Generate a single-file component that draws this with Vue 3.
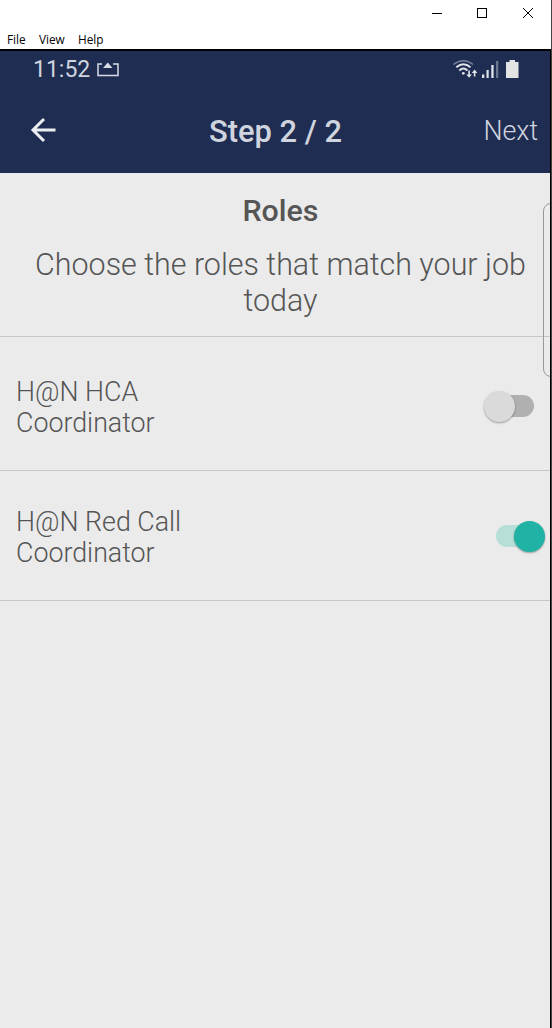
<script setup>
import { ref } from "vue";

const menuItems = ["File", "View", "Help"];

const roles = ref([
    { id: 1, lines: ["H@N HCA", "Coordinator"], enabled: false },
    { id: 2, lines: ["H@N Red Call", "Coordinator"], enabled: true },
]);

const toggleRole = (role) => {
    role.enabled = !role.enabled;
};
</script>

<template>
    <div class="window">
        <div class="title-bar">
            <svg class="window-controls" width="120" height="26" viewBox="0 0 120 26" fill="none" stroke="#000" shape-rendering="crispEdges">
                <path d="M0 13.5h10" />
                <rect x="45.5" y="8.5" width="9" height="9" />
                <path d="M91 8l10 10M101 8l-10 10" shape-rendering="auto" />
            </svg>
        </div>
        <nav class="menu-bar">
            <span v-for="item in menuItems" :key="item" class="menu-item">{{ item }}</span>
        </nav>

        <div class="screen">
            <header class="app-header">
                <div class="status-bar">
                    <span class="clock">11:52</span>
                    <svg class="cast-icon" width="24" height="18" viewBox="0 0 24 18">
                        <path d="M6 3H2v11.5h20V3H17" fill="none" stroke="#d6dbe5" stroke-width="1.5" />
                        <path d="M11.8 1.5l4.7 5.5h-9.4z" fill="#d6dbe5" />
                    </svg>
                    <svg class="signal-icons" width="70" height="22" viewBox="0 0 70 22">
                        <g fill="none" stroke="#dfe3ea" stroke-width="1.9">
                            <path d="M.5 5.5Q10.5 -1.8 20 5.5" stroke="#7a849d" stroke-width="1.5" />
                            <path d="M3.3 8.3Q10.5 2.2 17.5 8.3" />
                            <path d="M6.3 11.5Q10.5 7.7 14.5 11.5" />
                        </g>
                        <circle cx="10.3" cy="14.3" r="1.4" fill="#dfe3ea" />
                        <path d="M15.3 11.5h1.6v4h2l-2.8 3.3-2.8-3.3h2zM20.8 17.5h1.6v-3.5h2L21.6 10.5l-2.8 3.5h2z" fill="#dfe3ea" />
                        <path d="M29 15.5h2.3V19H29zM33.5 11h2.2v8h-2.2zM38.3 6h2.3v13h-2.3z" fill="#dfe3ea" />
                        <path d="M43 2h2.3v17H43z" fill="#6b7691" />
                        <path d="M56.5 1h5.5v2h3.5v16H53V3h3.5z" fill="#e2e3e4" />
                    </svg>
                </div>
                <div class="nav-bar">
                    <svg class="back-icon" width="27" height="26" viewBox="0 0 27 26" fill="none" stroke="#ebedf0" stroke-width="3">
                        <path d="M25.5 13H3M14 2L3 13l11 11" />
                    </svg>
                    <h1>Step 2 / 2</h1>
                    <span class="next">Next</span>
                </div>
            </header>

            <section class="intro">
                <h2>Roles</h2>
                <p>Choose the roles that match your job<br />today</p>
            </section>

            <div v-for="role in roles" :key="role.id" class="role-row" :class="{ enabled: role.enabled }" @click="toggleRole(role)">
                <div class="role-name">
                    <div v-for="line in role.lines" :key="line">{{ line }}</div>
                </div>
                <div class="switch"><span class="thumb"></span></div>
            </div>

            <div class="edge-handle"></div>
        </div>
    </div>
</template>

<style>
body {
    background: #fff;
    overflow: hidden;
}
</style>

<style scoped>
.window {
    box-sizing: border-box;
    width: 552px;
    height: 1028px;
    display: flex;
    flex-direction: column;
    border-right: 1px solid #444;
    background: #fff;
    overflow: hidden;
}

.title-bar {
    height: 27px;
    display: flex;
    justify-content: flex-end;
}

.window-controls {
    margin-right: -1px;
}

.menu-bar {
    height: 22px;
    display: flex;
    gap: 13.3px;
    padding-left: 7px;
    box-sizing: border-box;
    font-family: "Open Sans", "Noto Sans", sans-serif;
    font-size: 11.8px;
    line-height: 24px;
    color: #000;
}

.screen {
    position: relative;
    flex: 1;
    border-top: 2px solid #000;
    border-right: 1px solid #000;
    background: #ebebeb;
    font-family: Roboto, sans-serif;
    font-weight: 300;
    color: #555;
    overflow: hidden;
}

.app-header {
    height: 122px;
    background: #202d52;
    color: #cfd4de;
}

.status-bar {
    height: 38px;
    display: flex;
    align-items: center;
    padding: 0 27px 0 33px;
}

.clock {
    font-size: 23px;
    font-weight: 400;
    line-height: 38px;
}

.cast-icon {
    margin-left: 6px;
}

.signal-icons {
    margin-left: auto;
}

.nav-bar {
    height: 84px;
    display: grid;
    grid-template-columns: 180px 1fr 180px;
    align-items: center;
    padding: 2px 12px 0 30px;
    box-sizing: border-box;
}

.back-icon {
    margin-top: -4px;
}

h1,
h2,
p {
    margin: 0;
}

h1 {
    font-size: 30.9px;
    font-weight: 500;
    line-height: 36px;
    white-space: nowrap;
    margin-left: -1px;
}

.next {
    margin-top: -2px;
    font-size: 26.8px;
    line-height: 36px;
    text-align: right;
}

.intro {
    height: 164px;
    padding: 20px 0 0 11px;
    box-sizing: border-box;
    text-align: center;
    border-bottom: 1px solid #c6c6c6;
}

h2 {
    font-size: 30.4px;
    font-weight: 500;
    line-height: 36px;
}

p {
    margin-top: 18px;
    font-size: 30.45px;
    line-height: 36px;
    white-space: nowrap;
}

.role-row {
    height: 134px;
    display: flex;
    justify-content: space-between;
    align-items: center;
    padding: 5px 16px 0 16px;
    box-sizing: border-box;
    border-bottom: 1px solid #c6c6c6;
}

.role-row.enabled {
    height: 130px;
    padding: 1px 5px 0 16px;
}

.role-name {
    padding-top: 4px;
    font-size: 26.8px;
    line-height: 31px;
}

.switch {
    width: 50px;
    height: 32px;
    display: flex;
    align-items: center;
    position: relative;
}

.switch::before {
    content: "";
    position: absolute;
    right: 0;
    width: 38px;
    height: 22px;
    border-radius: 11px;
    background: #b0b0b0;
}

.thumb {
    position: relative;
    width: 31px;
    height: 31px;
    border-radius: 50%;
    background: #dadada;
    box-shadow: 0 1px 2px rgba(0, 0, 0, 0.35);
}

.enabled .switch {
    justify-content: flex-end;
}

.enabled .switch::before {
    right: 11px;
    background: #b7dfd8;
}

.enabled .thumb {
    background: #20b2a4;
}

.edge-handle {
    position: absolute;
    top: 152px;
    right: -9px;
    width: 14px;
    height: 172px;
    border: 1px solid #999;
    border-radius: 8px;
}
</style>
